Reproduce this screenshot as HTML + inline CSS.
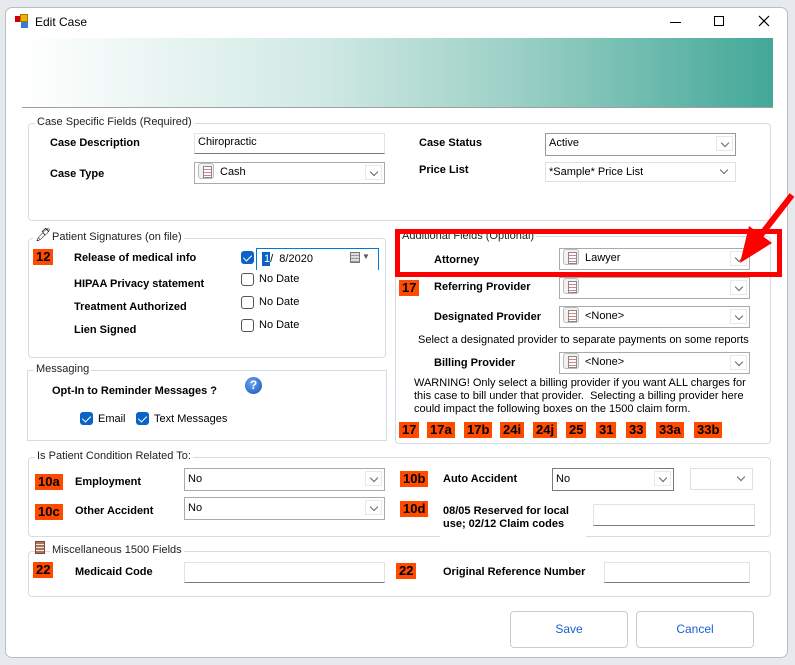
<!DOCTYPE html>
<html><head><meta charset="utf-8">
<style>
*{box-sizing:border-box;margin:0;padding:0}
body{width:795px;height:665px;background:#e6e9ee;position:relative;overflow:hidden;font-family:"Liberation Sans",sans-serif;font-size:11px;color:#000}
.a{position:absolute}
.win{left:5px;top:7px;width:783px;height:651px;background:#fff;border:1px solid #b9bcc2;border-radius:7px}
.grad{left:22px;top:38px;width:751px;height:70px;background:linear-gradient(to right,#fff 0%,#d0e9e4 40%,#9dd1c7 65%,#42a898 100%);border-bottom:1px solid #a0a0a0}
.grp{position:absolute;border:1px solid #d5dce4;border-radius:4px}
.lg{position:absolute;background:#fff;padding:0 2px;font-size:11px;color:#222;white-space:nowrap}
.b{position:absolute;font-weight:bold;font-size:11px;white-space:nowrap}
.t{position:absolute;font-size:11px;white-space:nowrap}
.badge{position:absolute;background:#ff4a00;font-weight:bold;font-size:13px;height:16px;line-height:16px;padding:0 3px;color:#000}
.in{position:absolute;border:1px solid #e3e3e3;border-bottom:1px solid #7a7a7a;background:#fff;font-size:11px;padding:2px 3px}
.cb{position:absolute;border:1px solid #7a7a7a;background:#fff;font-size:11px;padding:0 3px;line-height:19px}
.cb.l{border-color:#e0e0e0}
.cb .ar{position:absolute;right:2px;top:2px;width:17px;height:15px;border:1px solid #e8e8e8;background:#fff}
.cb .ar:after{content:"";position:absolute;left:5px;top:3px;width:5px;height:5px;border-right:1px solid #666;border-bottom:1px solid #666;transform:rotate(45deg)}
.cb.l .ar{border:none}
.ic{display:inline-block;width:16px;height:16px;border:1px solid #bbb;border-radius:3px;background:#f2f2f2;vertical-align:middle;margin-right:6px;position:relative;top:-1px}
.ic:after{content:"";position:absolute;left:4px;top:2px;width:7px;height:10px;border:1px solid #888;background:repeating-linear-gradient(#fff 0 2px,#c88 2px 3px)}
.chk{position:absolute;width:13px;height:13px;border:1px solid #555;border-radius:3px;background:#fff}
.chk.on{background:#0a64c8;border-color:#0a64c8}
.chk.on:after{content:"";position:absolute;left:3px;top:1px;width:4px;height:7px;border-right:1px solid #fff;border-bottom:1px solid #fff;transform:rotate(45deg)}
.btn{position:absolute;border:1px solid #ccc;border-radius:4px;background:#fff;color:#1a5fd0;font-size:12px;text-align:center;line-height:35px}
</style></head><body>
<div class="a win"></div>
<div class="a" style="left:15px;top:16px;width:6px;height:6px;background:#c00"></div>
<div class="a" style="left:20px;top:14px;width:8px;height:8px;background:#f0b000;border:1px solid #a70"></div>
<div class="a" style="left:21px;top:22px;width:7px;height:6px;background:#3a7ad8"></div>
<div class="t" style="left:35px;top:15px;font-size:12px">Edit Case</div>
<div class="a" style="left:670px;top:22px;width:11px;height:1px;background:#000"></div>
<div class="a" style="left:714px;top:16px;width:10px;height:10px;border:1px solid #000"></div>
<svg class="a" style="left:758px;top:15px" width="12" height="12"><path d="M1 1L11 11M11 1L1 11" stroke="#000" stroke-width="1.2"/></svg>
<div class="a grad"></div>

<div class="grp" style="left:28px;top:123px;width:743px;height:98px"></div>
<div class="lg" style="left:35px;top:116px">Case Specific Fields (Required)</div>
<div class="b" style="left:50px;top:137px">Case Description</div>
<div class="in" style="left:194px;top:133px;width:191px;height:21px">Chiropractic</div>
<div class="b" style="left:50px;top:168px">Case Type</div>
<div class="cb" style="left:194px;top:162px;width:191px;height:22px;border-color:#aaa"><span class="ic"></span>Cash<span class="ar"></span></div>
<div class="b" style="left:419px;top:137px">Case Status</div>
<div class="cb" style="left:545px;top:133px;width:191px;height:23px;border-color:#999">Active<span class="ar"></span></div>
<div class="b" style="left:419px;top:164px">Price List</div>
<div class="cb l" style="left:545px;top:162px;width:191px;height:20px;line-height:18px">*Sample* Price List<span class="ar" style="top:1px"></span></div>

<div class="grp" style="left:28px;top:238px;width:358px;height:120px"></div>
<div class="lg" style="left:33px;top:227px;font-size:13px">🖊</div>
<div class="lg" style="left:50px;top:231px">Patient Signatures (on file)</div>
<div class="badge" style="left:33px;top:249px">12</div>
<div class="b" style="left:74px;top:252px">Release of medical info</div>
<div class="b" style="left:74px;top:278px">HIPAA Privacy statement</div>
<div class="b" style="left:74px;top:301px">Treatment Authorized</div>
<div class="b" style="left:74px;top:324px">Lien Signed</div>
<div class="chk on" style="left:241px;top:251px"></div>
<div class="a" style="left:256px;top:248px;width:123px;height:22px;border:1px solid #0078d7;border-bottom:none;background:#fff"></div>
<div class="a" style="left:262px;top:252px;width:8px;height:14px;background:#0a64c8"></div>
<div class="t" style="left:264px;top:253px;font-size:11px"><span style="color:#fff">1</span>/&nbsp; 8/2020</div>
<div class="a" style="left:350px;top:252px;width:10px;height:11px;border:1px solid #777;background:repeating-linear-gradient(#ddd 0 2px,#999 2px 3px)"></div>
<div class="t" style="left:362px;top:252px;font-size:8px;color:#557">▼</div>
<div class="chk" style="left:241px;top:273px"></div><div class="t" style="left:259px;top:273px">No Date</div>
<div class="chk" style="left:241px;top:296px"></div><div class="t" style="left:259px;top:296px">No Date</div>
<div class="chk" style="left:241px;top:319px"></div><div class="t" style="left:259px;top:319px">No Date</div>

<div class="grp" style="left:27px;top:370px;width:360px;height:71px;border-radius:0"></div>
<div class="lg" style="left:34px;top:363px">Messaging</div>
<div class="b" style="left:52px;top:385px">Opt-In to Reminder Messages ?</div>
<div class="a" style="left:245px;top:377px;width:17px;height:17px;border-radius:50%;background:radial-gradient(circle at 40% 35%,#6aa8f0,#1550b0);color:#fff;font-weight:bold;font-size:12px;text-align:center;line-height:17px">?</div>
<div class="chk on" style="left:80px;top:412px"></div><div class="t" style="left:98px;top:413px">Email</div>
<div class="chk on" style="left:136px;top:412px"></div><div class="t" style="left:154px;top:413px">Text Messages</div>

<div class="grp" style="left:395px;top:236px;width:376px;height:208px"></div>
<div class="lg" style="left:400px;top:230px">Additional Fields (Optional)</div>
<div class="b" style="left:434px;top:254px">Attorney</div>
<div class="cb" style="left:559px;top:248px;width:191px;height:22px;border-color:#aaa"><span class="ic"></span>Lawyer<span class="ar"></span></div>
<div class="badge" style="left:399px;top:280px">17</div>
<div class="b" style="left:434px;top:281px">Referring Provider</div>
<div class="cb" style="left:559px;top:277px;width:191px;height:22px;border-color:#aaa"><span class="ic"></span><span class="ar"></span></div>
<div class="b" style="left:434px;top:311px">Designated Provider</div>
<div class="cb" style="left:559px;top:306px;width:191px;height:22px;border-color:#aaa"><span class="ic"></span>&lt;None&gt;<span class="ar"></span></div>
<div class="t" style="left:418px;top:334px">Select a designated provider to separate payments on some reports</div>
<div class="b" style="left:434px;top:357px">Billing Provider</div>
<div class="cb" style="left:559px;top:352px;width:191px;height:22px;border-color:#aaa"><span class="ic"></span>&lt;None&gt;<span class="ar"></span></div>
<div class="t" style="left:414px;top:377px;line-height:13px">WARNING! Only select a billing provider if you want ALL charges for<br>this case to bill under that provider.&nbsp; Selecting a billing provider here<br>could impact the following boxes on the 1500 claim form.</div>
<div class="badge" style="left:399px;top:422px">17</div>
<div class="badge" style="left:427px;top:422px">17a</div>
<div class="badge" style="left:464px;top:422px">17b</div>
<div class="badge" style="left:500px;top:422px">24i</div>
<div class="badge" style="left:533px;top:422px">24j</div>
<div class="badge" style="left:566px;top:422px">25</div>
<div class="badge" style="left:596px;top:422px">31</div>
<div class="badge" style="left:626px;top:422px">33</div>
<div class="badge" style="left:656px;top:422px">33a</div>
<div class="badge" style="left:694px;top:422px">33b</div>

<div class="a" style="left:395px;top:229px;width:387px;height:48px;border:5px solid #ff0000"></div>
<svg class="a" style="left:0;top:0" width="795" height="665"><line x1="792" y1="195" x2="757" y2="240" stroke="#f00" stroke-width="6"/><polygon points="740,263 749,226 772,243" fill="#f00"/></svg>

<div class="grp" style="left:28px;top:457px;width:743px;height:80px"></div>
<div class="a" style="left:440px;top:533px;width:146px;height:6px;background:#fff"></div>
<div class="lg" style="left:35px;top:450px">Is Patient Condition Related To:</div>
<div class="badge" style="left:35px;top:474px">10a</div>
<div class="b" style="left:75px;top:476px">Employment</div>
<div class="cb" style="left:184px;top:468px;width:201px;height:23px;border-color:#aaa;line-height:20px">No<span class="ar"></span></div>
<div class="badge" style="left:35px;top:504px">10c</div>
<div class="b" style="left:75px;top:505px">Other Accident</div>
<div class="cb" style="left:184px;top:497px;width:201px;height:23px;border-color:#aaa;line-height:20px">No<span class="ar"></span></div>
<div class="badge" style="left:400px;top:471px">10b</div>
<div class="b" style="left:443px;top:473px">Auto Accident</div>
<div class="cb" style="left:552px;top:468px;width:122px;height:23px;line-height:20px">No<span class="ar"></span></div>
<div class="cb l" style="left:690px;top:468px;width:63px;height:22px"><span class="ar"></span></div>
<div class="badge" style="left:400px;top:501px">10d</div>
<div class="b" style="left:443px;top:505px;line-height:13px">08/05 Reserved for local<br>use; 02/12 Claim codes</div>
<div class="in" style="left:593px;top:504px;width:162px;height:22px"></div>

<div class="grp" style="left:28px;top:551px;width:743px;height:46px"></div>
<div class="a" style="left:35px;top:541px;width:10px;height:13px;background:repeating-linear-gradient(#a75 0 2px,#f3e6dd 2px 3px);border:1px solid #844"></div>
<div class="lg" style="left:50px;top:544px">Miscellaneous 1500 Fields</div>
<div class="badge" style="left:33px;top:562px">22</div>
<div class="b" style="left:75px;top:566px">Medicaid Code</div>
<div class="in" style="left:184px;top:562px;width:201px;height:21px"></div>
<div class="badge" style="left:396px;top:563px">22</div>
<div class="b" style="left:443px;top:566px">Original Reference Number</div>
<div class="in" style="left:604px;top:562px;width:146px;height:21px"></div>

<div class="btn" style="left:510px;top:611px;width:118px;height:37px">Save</div>
<div class="btn" style="left:636px;top:611px;width:118px;height:37px">Cancel</div>
</body></html>
